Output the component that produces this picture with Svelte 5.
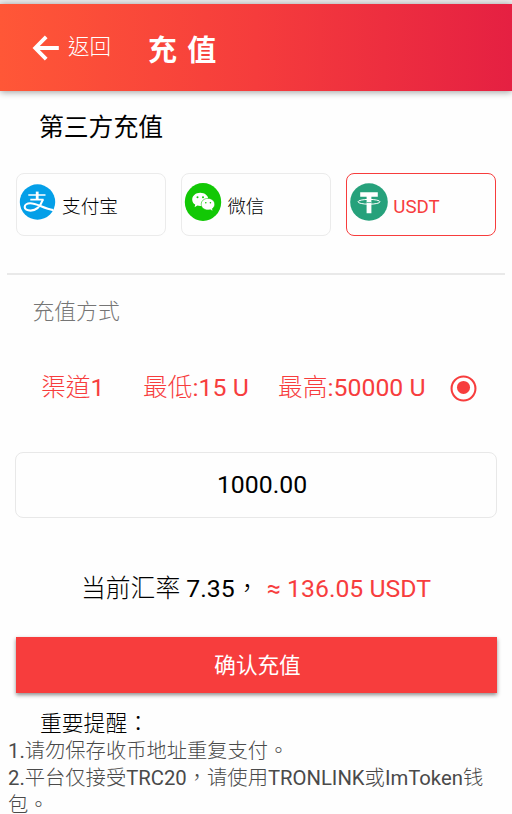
<script lang="ts">
  type Method = "alipay" | "wechat" | "usdt";

  const methods: { id: Method; label: string }[] = [
    { id: "alipay", label: "支付宝" },
    { id: "wechat", label: "微信" },
    { id: "usdt", label: "USDT" },
  ];

  const notes = [
    "1.请勿保存收币地址重复支付。",
    "2.平台仅接受TRC20，请使用TRONLINK或ImToken钱包。",
  ];

  const RATE = 7.35;

  let selected: Method = $state("usdt");
  let amount = $state("1000.00");

  const converted = $derived((Number(amount) / RATE || 0).toFixed(2));

  /** Splits text into Latin and Chinese runs, which are set in different weights. */
  function runs(text: string): string[] {
    return text.match(/[\x20-\x7e]+|[^\x20-\x7e]+/g) ?? [];
  }
</script>

{#snippet mixed(text: string)}
  {#each runs(text) as run, i (i)}<span class:latin={run.charCodeAt(0) < 128}>{run}</span>{/each}
{/snippet}

<div class="page">
  <header>
    <button class="back" type="button">
      <svg viewBox="0 0 28 28" aria-hidden="true">
        <path d="M14.2 2.8 3.2 14l11 11.2M3.8 14h23" />
      </svg>
      <span>返回</span>
    </button>
    <h1>充 值</h1>
  </header>

  <h2>第三方充值</h2>

  <div class="methods">
    {#each methods as method (method.id)}
      <button
        type="button"
        class="method"
        class:active={selected === method.id}
        onclick={() => (selected = method.id)}
      >
        {#if method.id === "alipay"}
          <svg class="logo alipay" viewBox="0 0 38 38" aria-hidden="true">
            <circle cx="18.5" cy="19" r="17.7" fill="#049fe8" />
            <g fill="none" stroke="#fff">
              <path d="M9.3 12h17.2M11.3 16.6h13.2" stroke-width="1.6" />
              <path d="M18.2 8.6v8" stroke-width="2.8" />
              <path
                d="M24 16.4c-2 5.4-6 11.2-12.4 11.2-3.4 0-5.9-1.2-5.9-3.6 0-2.2 2.5-3.7 5.5-3.7 6.5 0 13.2 5 23 6.8"
                stroke-width="2.1"
              />
            </g>
          </svg>
        {:else if method.id === "wechat"}
          <svg class="logo" viewBox="0 0 38 38" aria-hidden="true">
            <ellipse cx="19" cy="19" rx="18.2" ry="18.9" fill="#12c805" />
            <path
              d="M16.2 9.8c4.5 0 8.2 2.9 8.2 6.6s-3.7 6.6-8.2 6.6c-1 0-1.9-.1-2.8-.4l-2.8 1.6.6-2.6c-2-1.2-3-3.1-3-5.2 0-3.7 3.6-6.6 8-6.6z"
              fill="#fff"
            />
            <path
              d="M24 15.4c3.9 0 6.7 2.5 6.7 5.8 0 1.9-.9 3.4-2.4 4.5l.5 2.4-2.5-1.4c-.7.2-1.5.3-2.3.3-3.9 0-6.8-2.5-6.8-5.8s2.9-5.8 6.8-5.8z"
              fill="#fff"
              stroke="#12c805"
              stroke-width=".6"
            />
            <g fill="#12c805">
              <circle cx="13.5" cy="14.3" r="1" />
              <circle cx="19" cy="14.3" r="1" />
              <circle cx="21.8" cy="19.7" r=".8" />
              <circle cx="26.4" cy="19.7" r=".8" />
            </g>
          </svg>
        {:else}
          <svg class="logo usdt" viewBox="0 0 38 38" aria-hidden="true">
            <circle cx="19" cy="19" r="18.8" fill="#26a17b" />
            <path d="M10.2 9.2h17.6v4.6h-6.4v16.4h-4.8V13.8h-6.4z" fill="#fff" />
            <ellipse cx="19" cy="18.8" rx="11" ry="2.4" fill="none" stroke="#fff" />
            <path d="M16.6 19.5c1.4.1 3.4.1 4.8 0" fill="none" stroke="#26a17b" stroke-width=".7" />
          </svg>
        {/if}
        <span class="label {method.id}">{@render mixed(method.label)}</span>
      </button>
    {/each}
  </div>

  <hr />

  <h3>充值方式</h3>

  <label class="channel">
    <span class="name">{@render mixed("渠道1")}</span>
    <span class="min">{@render mixed("最低:15 U")}</span>
    <span class="max">{@render mixed("最高:50000 U")}</span>
    <svg class="radio" viewBox="0 0 26 26" aria-hidden="true">
      <circle cx="13" cy="13" r="11.5" fill="none" stroke="currentColor" stroke-width="2" />
      <circle cx="13" cy="12" r="6.3" fill="currentColor" />
    </svg>
  </label>

  <input class="amount" bind:value={amount} inputmode="decimal" aria-label="充值" />

  <p class="rate">
    <span>{@render mixed(`当前汇率 ${RATE}，`)}</span>
    <em>≈ {converted} USDT</em>
  </p>

  <button class="submit" type="button">确认充值</button>

  <section class="notes">
    <h4>重要提醒：</h4>
    {#each notes as note (note)}
      <p>{@render mixed(note)}</p>
    {/each}
  </section>
</div>

<style>
  :global(body) {
    margin: 0;
    background: #fefefe;
  }

  .page {
    --red: #f73d3d;
    box-sizing: border-box;
    border-top: 4px solid #ececec;
    background: #fefefe;
    color: #000;
    font-family: Roboto, "Noto Sans CJK TC", sans-serif;
    font-weight: 300;
  }

  button,
  input {
    box-sizing: border-box;
    font: inherit;
  }

  h1,
  h2,
  h3,
  h4,
  p {
    margin: 0;
    white-space: nowrap;
  }

  .latin {
    font-weight: 400;
  }

  header {
    display: flex;
    align-items: center;
    height: 87px;
    padding-left: 32px;
    background: linear-gradient(90deg, #ff5737, #f53c3c 50%, #e52042);
    box-shadow: 0 1px 7px rgba(0, 0, 0, 0.4);
    color: #fff;
  }

  .back {
    display: flex;
    align-items: center;
    width: 116px;
    padding: 0;
    border: 0;
    background: none;
    color: inherit;
    font-size: 21.5px;
    line-height: 30px;
  }

  .back svg {
    width: 28px;
    height: 28px;
    margin-right: 8px;
    fill: none;
    stroke: #fff;
    stroke-width: 3.8;
  }

  .back span {
    margin-bottom: 2px;
  }

  h1 {
    padding-top: 7px;
    font-size: 29px;
    font-weight: 700;
    line-height: 40px;
    word-spacing: 3px;
  }

  h2 {
    padding: 19px 0 0 39px;
    font-size: 24.8px;
    font-weight: 400;
    line-height: 36px;
  }

  .methods {
    display: grid;
    grid-template-columns: repeat(3, 1fr);
    gap: 15.5px;
    padding: 27px 16px 0;
  }

  .method {
    display: flex;
    align-items: flex-start;
    height: 63px;
    padding: 9px 0 0 2px;
    border: 1px solid #ebebeb;
    border-radius: 8px;
    background: #fefefe;
    color: #000;
    font-size: 18.7px;
    line-height: 28px;
  }

  .method.active {
    border-color: var(--red);
    color: var(--red);
  }

  .label {
    margin: 10px 0 0 5px;
  }

  .logo {
    flex: none;
    width: 38px;
    height: 38px;
  }

  .logo.usdt {
    margin-left: 1px;
  }

  hr {
    height: 2px;
    margin: 37px 7px 0;
    border: 0;
    background: #e9e9e9;
  }

  h3 {
    padding: 21px 0 0 32.5px;
    color: #757575;
    font-size: 21.8px;
    font-weight: 300;
    line-height: 32px;
  }

  .channel {
    display: flex;
    align-items: center;
    height: 36px;
    margin: 39px 0 0 41px;
    color: var(--red);
    font-size: 24.8px;
  }

  .name {
    width: 102px;
  }

  .min {
    width: 135px;
  }

  .max {
    width: 172px;
  }

  .radio {
    width: 27px;
    height: 27px;
    margin-top: 6px;
  }

  .amount {
    display: block;
    width: 482px;
    height: 66px;
    margin: 49px 0 0 15px;
    padding: 0 0 2px 12px;
    border: 1px solid #e8e8e8;
    border-radius: 8px;
    background: #fefefe;
    color: #000;
    font-size: 24.8px;
    font-weight: 400;
    text-align: center;
  }

  .rate {
    display: flex;
    justify-content: space-between;
    margin: 53px 81px 0;
    font-size: 24.8px;
    line-height: 36px;
  }

  .rate em {
    color: var(--red);
    font-style: normal;
    font-weight: 400;
  }

  .submit {
    display: block;
    width: 481px;
    height: 56px;
    margin: 30px 0 0 16px;
    padding: 0 0 4px 2px;
    border: 0;
    background: var(--red);
    box-shadow: 0 2px 4px rgba(0, 0, 0, 0.45);
    color: #fff;
    font-size: 21.6px;
    font-weight: 400;
  }

  .notes {
    padding: 17px 20px 0 8px;
    color: #4a4a4a;
    font-size: 20.3px;
    line-height: 27px;
  }

  .notes h4 {
    padding-left: 32px;
    color: #000;
    font-size: 21.8px;
    font-weight: 300;
    line-height: 28px;
  }

  .notes p {
    white-space: normal;
  }
</style>
